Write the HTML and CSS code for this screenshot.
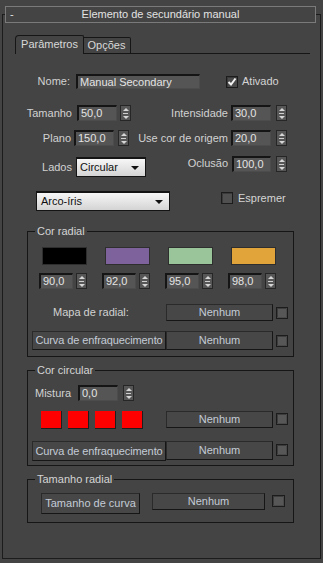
FILE: index.html
```html
<!DOCTYPE html>
<html>
<head>
<meta charset="utf-8">
<link rel="stylesheet" href="styles.css">
</head>
<body>
<div class="rollout">
  <div class="rhead"><span class="minus">-</span><span class="title">Elemento de secundário manual</span></div>
  <div class="tabs">
    <div class="tab active">Parâmetros</div>
    <div class="tab">Opções</div>
    <div class="tabfill"></div>
  </div>

  <div class="row r-nome">
    <span class="lbl">Nome:</span>
    <span class="fld name">Manual Secondary</span>
    <span class="chk on"><svg width="10" height="10" viewBox="0 0 10 10"><path d="M1.5 5 L4 7.5 L8.5 1.5" fill="none" stroke="#f2f2f2" stroke-width="2"/></svg></span>
    <span class="chklbl">Ativado</span>
  </div>

  <div class="row r-tam">
    <span class="lbl">Tamanho</span>
    <span class="fld">50,0</span>
    <span class="spin"></span>
    <span class="lbl lbl2">Intensidade</span>
    <span class="fld">30,0</span>
    <span class="spin"></span>
  </div>

  <div class="row r-plano">
    <span class="lbl">Plano</span>
    <span class="fld">150,0</span>
    <span class="spin"></span>
    <span class="lbl lbl2">Use cor de origem</span>
    <span class="fld">20,0</span>
    <span class="spin"></span>
  </div>

  <div class="row r-lados">
    <span class="lbl">Lados</span>
    <span class="dd">Circular<i class="arrow"></i></span>
    <span class="lbl lbl2">Oclusão</span>
    <span class="fld">100,0</span>
    <span class="spin"></span>
  </div>

  <div class="row r-arco">
    <span class="dd">Arco-íris<i class="arrow"></i></span>
    <span class="chk"></span>
    <span class="chklbl">Espremer</span>
  </div>

  <fieldset class="grp g1">
    <legend>Cor radial</legend>
    <div class="swatches">
      <span class="sw black"></span>
      <span class="sw purple"></span>
      <span class="sw green"></span>
      <span class="sw orange"></span>
    </div>
    <div class="spins">
      <span class="unit"><span class="fld">90,0</span><span class="spin"></span></span>
      <span class="unit"><span class="fld">92,0</span><span class="spin"></span></span>
      <span class="unit"><span class="fld">95,0</span><span class="spin"></span></span>
      <span class="unit"><span class="fld">98,0</span><span class="spin"></span></span>
    </div>
    <div class="row r-mapa">
      <span class="maplbl">Mapa de radial:</span>
      <span class="btn none">Nenhum</span>
      <span class="chk small"></span>
    </div>
    <div class="row r-curva">
      <span class="btn curve">Curva de enfraquecimento</span>
      <span class="btn none">Nenhum</span>
      <span class="chk small"></span>
    </div>
  </fieldset>

  <fieldset class="grp g2">
    <legend>Cor circular</legend>
    <div class="row r-mist">
      <span class="mistlbl">Mistura</span>
      <span class="fld">0,0</span>
      <span class="spin"></span>
    </div>
    <div class="row r-reds">
      <span class="red"></span>
      <span class="red"></span>
      <span class="red"></span>
      <span class="red"></span>
      <span class="btn none">Nenhum</span>
      <span class="chk small"></span>
    </div>
    <div class="row r-curva2">
      <span class="btn curve">Curva de enfraquecimento</span>
      <span class="btn none">Nenhum</span>
      <span class="chk small"></span>
    </div>
  </fieldset>

  <fieldset class="grp g3">
    <legend>Tamanho radial</legend>
    <div class="row r-tr">
      <span class="btn tcurve">Tamanho de curva</span>
      <span class="btn none2">Nenhum</span>
      <span class="chk small"></span>
    </div>
  </fieldset>
</div>
</body>
</html>
```

FILE: styles.css
```css
* { box-sizing: border-box; }
html, body { margin: 0; padding: 0; background: #444444; }
body {
  font: 11px/13px "Liberation Sans", Arial, sans-serif;
  color: #d2d2d2;
  width: 323px;
  height: 563px;
  overflow: hidden;
}

.rollout {
  margin: 14px 0 0 2px;
  width: 319px;
  height: 545px;
  border: 1px solid #1c1c1c;
}

.rhead {
  position: relative;
  margin: -9px 0 0 2px;
  width: 311px;
  height: 17px;
  border: 1px solid #7a7a7a;
  background: #444444;
  display: flex;
  line-height: 15px;
  color: #e2e2e2;
}
.rhead .minus { width: 20px; padding-left: 4px; }
.rhead .title { flex: 1; text-align: center; }
.rhead::after { content: ""; width: 20px; }

.tabs {
  margin: 12px 0 0 12px;
  width: 295px;
  height: 19px;
  display: flex;
  align-items: flex-end;
}
.tab {
  text-align: center;
  color: #d8d8d8;
  border: 1px solid #161616;
}
.tab.active {
  width: 69px;
  height: 19px;
  line-height: 17px;
  border-bottom: none;
  border-top-left-radius: 4px;
  border-top-right-radius: 2px;
}
.tab:not(.active) {
  width: 48px;
  height: 17px;
  line-height: 15px;
  margin-left: -1px;
  border-left: none;
  border-top-right-radius: 2px;
}
.tabfill { flex: 1; height: 1px; border-bottom: 1px solid #161616; }

.row { display: flex; align-items: center; }
.lbl { flex: none; text-align: right; white-space: nowrap; }

.fld {
  flex: none;
  height: 16px;
  background: #555555;
  border-top: 2px solid #151515;
  border-left: 2px solid #151515;
  border-right: 1px solid #4c4c4c;
  border-bottom: 1px solid #4c4c4c;
  color: #e4e4e4;
  padding-left: 2px;
  line-height: 13px;
  white-space: nowrap;
  overflow: hidden;
}

.spin {
  flex: none;
  width: 11px;
  height: 16px;
  border: 1px solid #262626;
  background: #565656 linear-gradient(#cfcfcf, #cfcfcf) no-repeat center / 5px 1px;
  display: flex;
  flex-direction: column;
  align-items: center;
  justify-content: center;
  gap: 5px;
}
.spin::before, .spin::after {
  content: "";
  width: 0;
  height: 0;
  border-left: 3px solid transparent;
  border-right: 3px solid transparent;
}
.spin::before { border-bottom: 3px solid #d6d6d6; }
.spin::after { border-top: 3px solid #d6d6d6; }

.chk {
  flex: none;
  width: 12px;
  height: 12px;
  background: #505050;
  border: 1px solid #1c1c1c;
  box-shadow: inset 1px 1px 0 #3a3a3a;
  display: flex;
  align-items: center;
  justify-content: center;
}
.chk.on { background: #4a4a4a; }
.chk.small { background: #575757; box-shadow: inset -1px -1px 0 #4a4a4a, inset 1px 1px 0 #3c3c3c; }
.chklbl { white-space: nowrap; color: #d4d4d4; }

.dd {
  flex: none;
  display: flex;
  align-items: center;
  justify-content: space-between;
  height: 20px;
  background: linear-gradient(#f7f7f7, #d4d4d4);
  border: 1px solid #141414;
  border-top-width: 2px;
  color: #101010;
  padding: 0 6px 0 3px;
  line-height: 13px;
}
.arrow {
  width: 0;
  height: 0;
  border-left: 4px solid transparent;
  border-right: 4px solid transparent;
  border-top: 4px solid #111;
}

/* Nome row */
.r-nome { margin-top: 20px; height: 15px; }
.r-nome .lbl { width: 67px; }
.fld.name { margin-left: 6px; width: 124px; height: 15px; }
.r-nome .chk { margin-left: 26px; }
.r-nome .chklbl { margin-left: 4px; }

/* Tamanho row */
.r-tam { margin-top: 16px; height: 16px; }
.r-tam .lbl { width: 69px; }
.r-tam .fld { margin-left: 5px; width: 40px; }
.r-tam .spin { margin-left: 3px; }
.r-tam .lbl2 { width: 97px; }
.r-tam .lbl2 + .fld { margin-left: 3px; }
.r-tam .lbl2 ~ .spin { margin-left: 5px; }

/* Plano row */
.r-plano { margin-top: 9px; height: 16px; }
.r-plano .lbl { width: 68px; }
.r-plano .fld { margin-left: 3px; width: 40px; }
.r-plano .spin { margin-left: 4px; }
.r-plano .lbl2 { width: 99px; }
.r-plano .lbl2 ~ .spin { margin-left: 5px; }

/* Lados row */
.r-lados { margin-top: 10px; height: 21px; align-items: flex-start; }
.r-lados .lbl { width: 69px; margin-top: 5px; }
.r-lados .dd { margin-left: 4px; margin-top: 1px; width: 70px; }
.r-lados .lbl2 { width: 82px; margin-top: 1px; }
.r-lados .fld { margin-left: 4px; width: 39px; }
.r-lados .spin { margin-left: 5px; }

/* Arco-iris row */
.r-arco { margin-top: 14px; height: 20px; align-items: flex-start; }
.r-arco .dd { margin-left: 33px; width: 134px; padding-left: 4px; }
.r-arco .chk { margin-left: 51px; margin-top: 1px; }
.r-arco .chklbl { margin-left: 5px; margin-top: 1px; }

/* Groups */
.grp {
  margin: 0 0 0 24px;
  width: 267px;
  padding: 0;
  border: 1px solid #161616;
  min-width: 0;
}
.grp legend {
  margin-left: 7px;
  padding: 0 2px;
  line-height: 12px;
  color: #d4d4d4;
}
.g1 { margin-top: 14px; padding-bottom: 6px; }
.g2 { margin-top: 7px; padding-bottom: 4px; }
.g3 { margin-top: 7px; padding-bottom: 8px; }

.swatches { display: flex; gap: 18px; margin: 10px 0 0 14px; height: 18px; }
.sw { width: 45px; height: 18px; border: 1px solid #2e2e2e; }
.sw.black { background: #000000; }
.sw.purple { background: #7e629b; }
.sw.green { background: #9ac59b; }
.sw.orange { background: #e1a43b; }

.spins { display: flex; gap: 15px; margin: 8px 0 0 11px; height: 16px; }
.unit { display: flex; }
.unit .fld { width: 34px; }
.unit .spin { margin-left: 3px; }

.btn {
  flex: none;
  display: flex;
  align-items: center;
  justify-content: center;
  background: #474747;
  border: 1px solid #2a2a2a;
  border-right-color: #161616;
  border-bottom-color: #161616;
  color: #c4cbd6;
  white-space: nowrap;
  overflow: hidden;
}
.btn.none { width: 107px; height: 17px; }
.btn.curve { width: 134px; height: 19px; margin-left: 4px; letter-spacing: -0.1px; }

.r-mapa { margin-top: 15px; height: 17px; }
.maplbl { margin-left: 25px; width: 113px; white-space: nowrap; }
.r-mapa .chk { margin-left: 3px; }

.r-curva { margin-top: 10px; height: 19px; }
.r-curva .btn.none { height: 19px; }
.r-curva .chk { margin-left: 3px; }

.r-mist { margin-top: 9px; height: 16px; }
.mistlbl { margin-left: 7px; width: 43px; }
.r-mist .fld { width: 40px; height: 16px; }
.r-mist .spin { margin-left: 5px; }

.r-reds { margin-top: 10px; height: 18px; align-items: flex-start; }
.red {
  flex: none;
  width: 21px;
  height: 18px;
  background: #ff0000;
  border-right: 1px solid #1e1e1e;
  border-bottom: 1px solid #1e1e1e;
  margin-left: 6px;
}
.red:first-child { margin-left: 13px; }
.r-reds .btn { margin-left: 23px; }
.r-reds .chk { margin-left: 3px; margin-top: 2px; }

.r-curva2 { margin-top: 12px; height: 20px; align-items: flex-start; }
.r-curva2 .btn.curve { height: 20px; }
.r-curva2 .btn.none { height: 19px; }
.r-curva2 .chk { margin-left: 3px; margin-top: 3px; }

.r-tr { margin-top: 8px; height: 21px; align-items: flex-start; }
.btn.tcurve { margin-left: 13px; width: 99px; height: 21px; }
.btn.none2 { margin-left: 12px; width: 113px; height: 17px; }
.r-tr .chk { margin-left: 7px; margin-top: 2px; width: 13px; }
```
